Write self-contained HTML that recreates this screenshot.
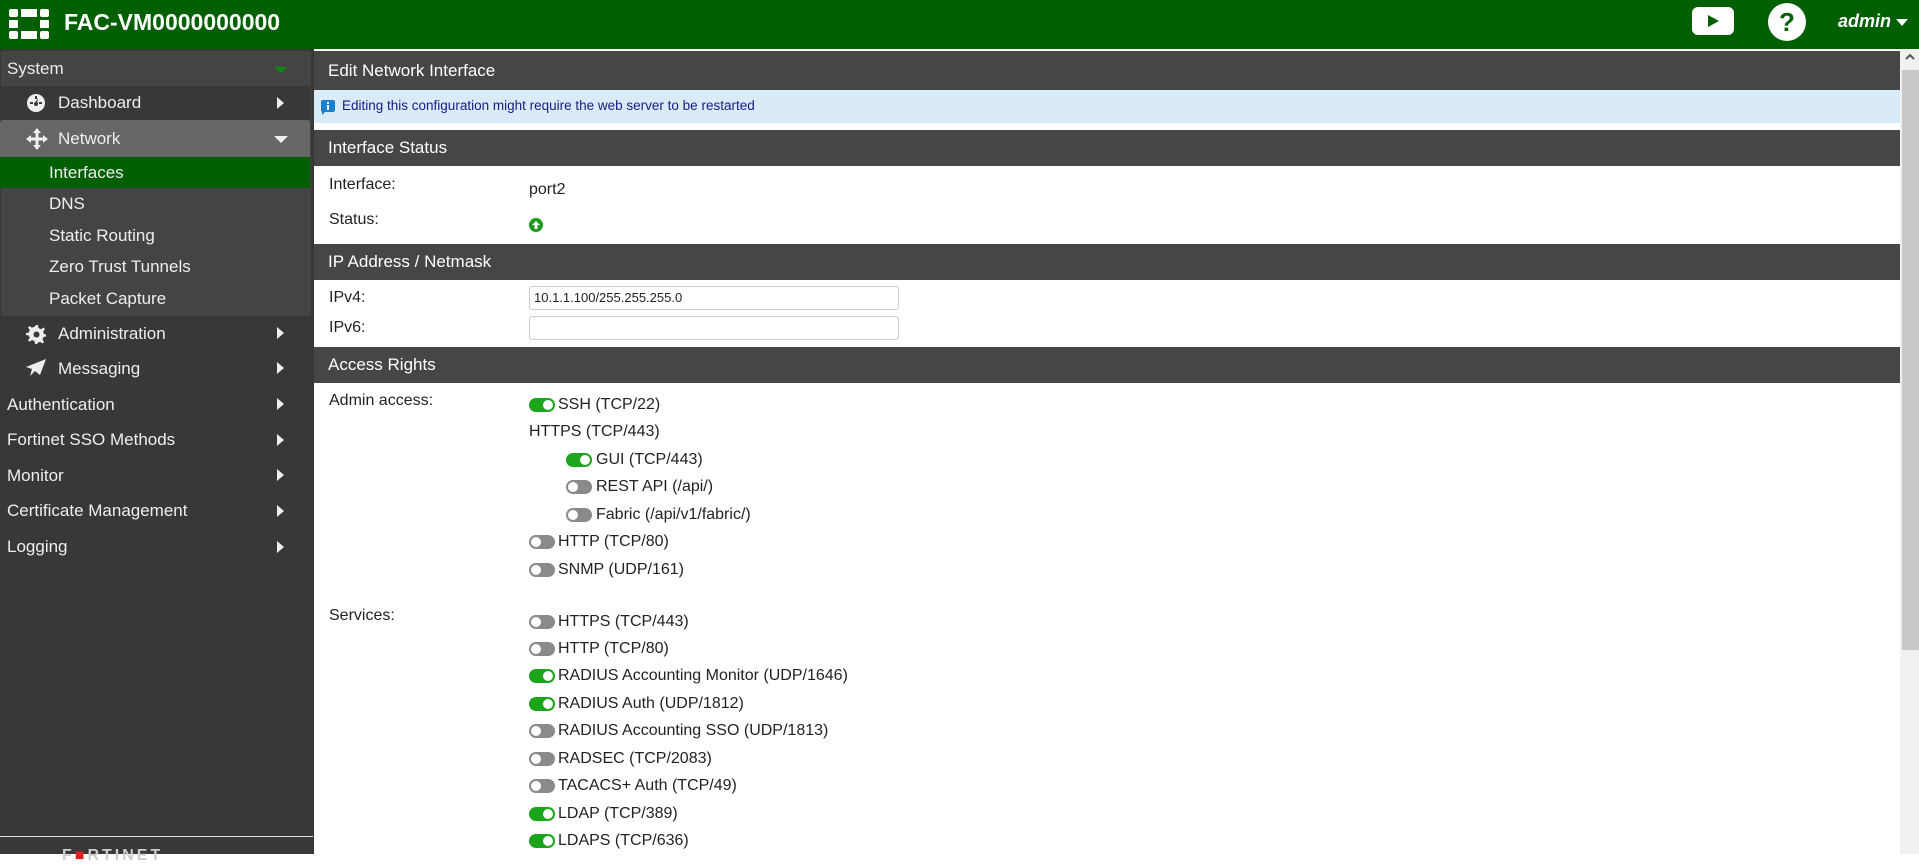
<!DOCTYPE html>
<html><head><meta charset="utf-8"><style>
*{margin:0;padding:0;box-sizing:border-box}
body{width:1919px;height:854px;overflow:hidden;font-family:"Liberation Sans",Arial,sans-serif;background:#fff;position:relative;color:#222}
.a{position:absolute}
#top{left:0;top:0;width:1919px;height:49px;background:#006000}
#side{left:0;top:49px;width:314px;height:805px;background:#383838}
.si{position:absolute;left:0;width:310px;color:#eee;font-size:17px;display:flex;align-items:center}
.arr{position:absolute;right:26px;width:0;height:0;border-top:6px solid transparent;border-bottom:6px solid transparent;border-left:7px solid #eee}
.band{position:absolute;left:314px;width:1586px;background:#464646;color:#fff;font-size:17px;display:flex;align-items:center;padding-left:14px}
.lbl{position:absolute;left:329px;font-size:16px;color:#222;transform:translateY(-50%)}
.t{position:absolute;font-size:16px;color:#222;transform:translateY(-50%);white-space:nowrap}
.tg{position:absolute;width:26px;height:14px;border-radius:7px;transform:translateY(-50%)}
.tg.on{background:#1aa51a}.tg.off{background:#8a8a8a}
.tg::after{content:"";position:absolute;top:2px;width:10px;height:10px;border-radius:50%;background:#fff}
.tg.on::after{right:2px}.tg.off::after{left:2px}
.inp{position:absolute;left:529px;width:370px;height:24px;border:1px solid #ccc;border-radius:3px;font-size:13px;padding-left:4px;line-height:22px}
</style></head><body>
<div id="top" class="a">
  <svg class="a" style="left:9px;top:9px" width="40" height="30" viewBox="0 0 40 30"><g fill="#fff"><rect x="0" y="0" width="9" height="8" rx="2"/><rect x="12" y="0" width="16" height="8"/><rect x="31" y="0" width="9" height="8" rx="2"/><rect x="0" y="11" width="9" height="8"/><rect x="31" y="11" width="9" height="8"/><rect x="0" y="22" width="9" height="8" rx="2"/><rect x="12" y="22" width="16" height="8"/><rect x="31" y="22" width="9" height="8" rx="2"/></g></svg>
  <div class="a" style="left:64px;top:9px;color:#fff;font-size:23px;font-weight:bold">FAC-VM0000000000</div>
  <svg class="a" style="left:1692px;top:7px" width="42" height="28" viewBox="0 0 42 28"><rect width="42" height="28" rx="6" fill="#fff"/><path d="M16 8 L27 14 L16 20Z" fill="#006000"/></svg>
  <svg class="a" style="left:1768px;top:3px" width="38" height="38" viewBox="0 0 38 38"><circle cx="19" cy="19" r="19" fill="#fff"/><text x="19" y="28" text-anchor="middle" font-family="Liberation Sans" font-weight="bold" font-size="26" fill="#006000">?</text></svg>
  <div class="a" style="left:1838px;top:11px;color:#fff;font-size:18px;font-weight:bold;font-style:italic">admin</div>
  <div class="a" style="left:1896px;top:19px;border-left:6px solid transparent;border-right:6px solid transparent;border-top:7px solid #fff"></div>
</div>
<div id="side" class="a">
  <div class="a" style="left:1px;top:2px;width:310px;height:265px;background:#444;border-radius:3px"></div>
</div>
<div class="si" style="top:51px;height:35px;padding-left:7px">System<div class="a" style="right:22px;top:16px;border-left:7px solid transparent;border-right:7px solid transparent;border-top:6px solid #0a8a0a"></div></div>
<div class="si" style="top:86px;height:34px;background:#383838;padding-left:58px">Dashboard<div class="arr" style="top:11px"></div></div>
<svg class="a" style="left:26px;top:93px" width="20" height="20" viewBox="0 0 20 20"><circle cx="10" cy="10" r="9" fill="#eee"/><g fill="#383838"><rect x="9" y="3" width="2" height="3"/><rect x="4" y="9" width="3" height="2"/><rect x="13" y="9" width="3" height="2"/><path d="M9 10 L12 5 L11 11Z"/><circle cx="10" cy="11" r="2"/></g></svg>
<div class="si" style="top:120px;height:37px;background:#666;padding-left:58px;border-radius:3px 3px 0 0">Network<div class="a" style="right:22px;top:16px;border-left:7px solid transparent;border-right:7px solid transparent;border-top:7px solid #eee"></div></div>
<svg class="a" style="left:26px;top:128px" width="22" height="22" viewBox="0 0 22 22"><path d="M11 0 L15 5 H12.5 V9.5 H17 V7 L22 11 L17 15 V12.5 H12.5 V17 H15 L11 22 L7 17 H9.5 V12.5 H5 V15 L0 11 L5 7 V9.5 H9.5 V5 H7Z" fill="#eee"/></svg>
<div class="si" style="top:157px;height:31px;background:#006000;padding-left:49px">Interfaces</div>
<div class="si" style="top:188px;height:32px;padding-left:49px">DNS</div>
<div class="si" style="top:220px;height:31px;padding-left:49px">Static Routing</div>
<div class="si" style="top:251px;height:32px;padding-left:49px">Zero Trust Tunnels</div>
<div class="si" style="top:283px;height:32px;padding-left:49px">Packet Capture</div>
<div class="si" style="top:316px;height:35px;padding-left:58px">Administration<div class="arr" style="top:11px"></div></div>
<svg class="a" style="left:26px;top:324px" width="20" height="20" viewBox="0 0 20 20"><path d="M10 1 L12 1 L12.5 4 L15 5.2 L17.5 3.5 L19 5 L17.2 7.5 L18 10 L20 10.5 V12.5 L17.5 13 L16.5 15.5 L18 18 L16.5 19.5 L14 17.8 L11.5 19 L11 20 H9 L8.5 17 L6 16 L3.5 17.8 L2 16.3 L3.8 14 L2.8 11.5 L0 11 V9 L2.8 8.5 L3.8 6 L2 3.5 L3.5 2 L6 3.8 L8.5 2.8Z" fill="#eee"/><circle cx="10.5" cy="10.5" r="3" fill="#383838"/></svg>
<div class="si" style="top:351px;height:35px;padding-left:58px">Messaging<div class="arr" style="top:11px"></div></div>
<svg class="a" style="left:26px;top:359px" width="20" height="18" viewBox="0 0 20 18"><path d="M20 0 L0 8 L6 10 L4 17 L9 12 L14 16Z" fill="#eee"/></svg>
<div class="si" style="top:387px;height:35px;padding-left:7px">Authentication<div class="arr" style="top:11px"></div></div>
<div class="si" style="top:422px;height:36px;padding-left:7px">Fortinet SSO Methods<div class="arr" style="top:12px"></div></div>
<div class="si" style="top:458px;height:35px;padding-left:7px">Monitor<div class="arr" style="top:11px"></div></div>
<div class="si" style="top:493px;height:36px;padding-left:7px">Certificate Management<div class="arr" style="top:12px"></div></div>
<div class="si" style="top:529px;height:36px;padding-left:7px">Logging<div class="arr" style="top:12px"></div></div>
<div class="a" style="left:0;top:836px;width:313px;height:1px;background:#ddd"></div>
<div class="a" style="left:62px;top:847px;color:#ccc;font-size:16px;font-weight:bold;letter-spacing:3px">F<span style="color:#e02020">■</span>RTINET</div>

<div class="band" style="top:51px;height:39px">Edit Network Interface</div>
<div class="a" style="left:314px;top:90px;width:1586px;height:33px;background:#d9ebf6"></div>
<svg class="a" style="left:321px;top:100px" width="14" height="15" viewBox="0 0 14 15"><rect width="14" height="12" rx="2" fill="#1b7fd0"/><path d="M1 11 L1 15 L5 11Z" fill="#1b7fd0"/><rect x="6" y="2" width="2" height="2" fill="#fff"/><rect x="6" y="5" width="2" height="5" fill="#fff"/></svg>
<div class="a" style="left:342px;top:98px;font-size:13.5px;color:#1a1a8a">Editing this configuration might require the web server to be restarted</div>
<div class="band" style="top:130px;height:36px">Interface Status</div>
<div class="lbl" style="top:185px">Interface:</div>
<div class="t" style="left:529px;top:190px">port2</div>
<div class="lbl" style="top:220px">Status:</div>
<svg class="a" style="left:529px;top:218px" width="14" height="14" viewBox="0 0 14 14"><circle cx="7" cy="7" r="7" fill="#1e9a1e"/><path d="M7 3 L11 7 H8.5 V11 H5.5 V7 H3Z" fill="#fff"/></svg>
<div class="band" style="top:244px;height:36px">IP Address / Netmask</div>
<div class="lbl" style="top:298px">IPv4:</div>
<div class="inp" style="top:286px">10.1.1.100/255.255.255.0</div>
<div class="lbl" style="top:328px">IPv6:</div>
<div class="inp" style="top:316px"></div>
<div class="band" style="top:347px;height:36px">Access Rights</div>
<div class="lbl" style="top:401px">Admin access:</div>
<div class="tg on" style="left:529px;top:405px"></div><div class="t" style="left:558px;top:405px">SSH (TCP/22)</div>
<div class="t" style="left:529px;top:432px">HTTPS (TCP/443)</div>
<div class="tg on" style="left:566px;top:460px"></div><div class="t" style="left:596px;top:460px">GUI (TCP/443)</div>
<div class="tg off" style="left:566px;top:487px"></div><div class="t" style="left:596px;top:487px">REST API (/api/)</div>
<div class="tg off" style="left:566px;top:515px"></div><div class="t" style="left:596px;top:515px">Fabric (/api/v1/fabric/)</div>
<div class="tg off" style="left:529px;top:542px"></div><div class="t" style="left:558px;top:542px">HTTP (TCP/80)</div>
<div class="tg off" style="left:529px;top:570px"></div><div class="t" style="left:558px;top:570px">SNMP (UDP/161)</div>
<div class="lbl" style="top:616px">Services:</div>
<div class="tg off" style="left:529px;top:622px"></div><div class="t" style="left:558px;top:622px">HTTPS (TCP/443)</div>
<div class="tg off" style="left:529px;top:649px"></div><div class="t" style="left:558px;top:649px">HTTP (TCP/80)</div>
<div class="tg on" style="left:529px;top:676px"></div><div class="t" style="left:558px;top:676px">RADIUS Accounting Monitor (UDP/1646)</div>
<div class="tg on" style="left:529px;top:704px"></div><div class="t" style="left:558px;top:704px">RADIUS Auth (UDP/1812)</div>
<div class="tg off" style="left:529px;top:731px"></div><div class="t" style="left:558px;top:731px">RADIUS Accounting SSO (UDP/1813)</div>
<div class="tg off" style="left:529px;top:759px"></div><div class="t" style="left:558px;top:759px">RADSEC (TCP/2083)</div>
<div class="tg off" style="left:529px;top:786px"></div><div class="t" style="left:558px;top:786px">TACACS+ Auth (TCP/49)</div>
<div class="tg on" style="left:529px;top:814px"></div><div class="t" style="left:558px;top:814px">LDAP (TCP/389)</div>
<div class="tg on" style="left:529px;top:841px"></div><div class="t" style="left:558px;top:841px">LDAPS (TCP/636)</div>

<div class="a" style="left:1900px;top:49px;width:19px;height:805px;background:#f1f1f1"></div>
<div class="a" style="left:1902px;top:70px;width:17px;height:580px;background:#c8c8c8"></div>
<svg class="a" style="left:1904px;top:52px" width="12" height="10" viewBox="0 0 12 10"><path d="M2 7 L6 3 L10 7" stroke="#555" stroke-width="2" fill="none"/></svg>
</body></html>
